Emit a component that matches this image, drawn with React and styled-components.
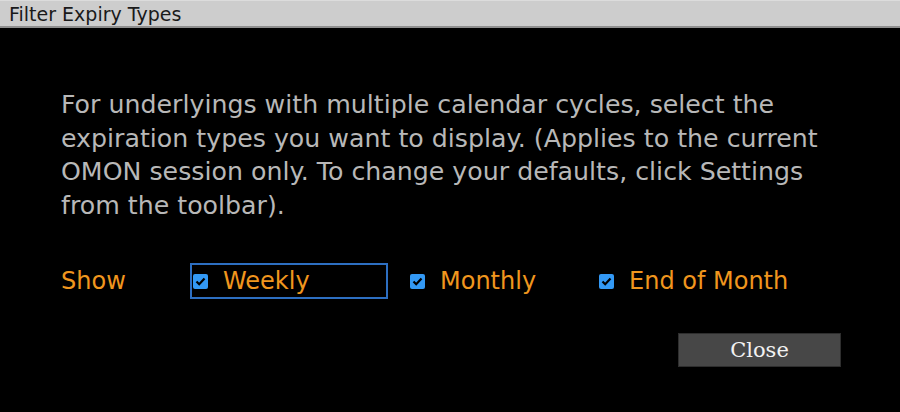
import React from "react";
import styled, { createGlobalStyle } from "styled-components";

const Global = createGlobalStyle`
  html, body { margin: 0; padding: 0; background: #000; }
  body { width: 900px; height: 412px; overflow: hidden; }
`;

const Dialog = styled.div`
  width: 900px;
  height: 412px;
  background: #000;
  display: flex;
  flex-direction: column;
  font-family: "DejaVu Sans", "Liberation Sans", sans-serif;
`;

const TitleBar = styled.div`
  height: 25px;
  background: #cdcdcd;
  border-top: 1px solid #dcdcdc;
  border-bottom: 2px solid #8f8f8f;
  display: flex;
  align-items: center;
  padding-left: 9px;
  font-family: "DejaVu Sans", sans-serif;
  font-size: 19px;
  color: #1a1a1a;
`;

const Body = styled.div`
  display: flex;
  flex-direction: column;
  padding: 60px 59px 0 61px;
`;

const Description = styled.p`
  margin: 0;
  color: #b8b8b8;
  font-size: 25.25px;
  line-height: 33.5px;
  white-space: nowrap;
`;

const ShowRow = styled.div`
  display: flex;
  align-items: center;
  margin-top: 41px;
  height: 36px;
`;

const Label = styled.span`
  color: #f0961e;
  font-size: 24px;
  width: 129px;
`;

const Option = styled.label`
  display: flex;
  align-items: center;
  gap: 15px;
  box-sizing: border-box;
  height: 36px;
  padding: 0 0 0 1px;
  width: ${(p) => (p.$w ? p.$w + "px" : "auto")};
  margin-right: ${(p) => p.$mr || 0}px;
  border: 2px solid ${(p) => (p.$focused ? "#2d6fc2" : "transparent")};
  color: #f0961e;
  font-size: 24px;
`;

const Box = styled.span`
  flex: none;
  width: 15px;
  height: 15px;
  border-radius: 2px;
  background: #3399f5;
  display: flex;
  align-items: center;
  justify-content: center;
`;

const Footer = styled.div`
  display: flex;
  justify-content: flex-end;
  margin-top: 34px;
`;

const CloseButton = styled.button`
  width: 163px;
  height: 34px;
  background: #474747;
  border: 1px solid #2e2e2e;
  color: #f2f2f2;
  font-family: "DejaVu Serif", serif;
  font-size: 21px;
  padding: 0;
`;

const Check = () => (
  <svg width="11" height="9" viewBox="0 0 11 9">
    <path d="M1.5 4.5 L4.2 7.2 L9.5 1.5" fill="none" stroke="#000" strokeWidth="2.2" />
  </svg>
);

export default function App() {
  return (
    <>
      <Global />
      <Dialog>
        <TitleBar>Filter Expiry Types</TitleBar>
        <Body>
          <Description>
            For underlyings with multiple calendar cycles, select the
            <br />
            expiration types you want to display. (Applies to the current
            <br />
            OMON session only. To change your defaults, click Settings
            <br />
            from the toolbar).
          </Description>
          <ShowRow>
            <Label>Show</Label>
            <Option $focused $w={198} $mr={19}>
              <Box><Check /></Box>Weekly
            </Option>
            <Option $w={189}>
              <Box><Check /></Box>Monthly
            </Option>
            <Option>
              <Box><Check /></Box>End of Month
            </Option>
          </ShowRow>
          <Footer>
            <CloseButton>Close</CloseButton>
          </Footer>
        </Body>
      </Dialog>
    </>
  );
}
